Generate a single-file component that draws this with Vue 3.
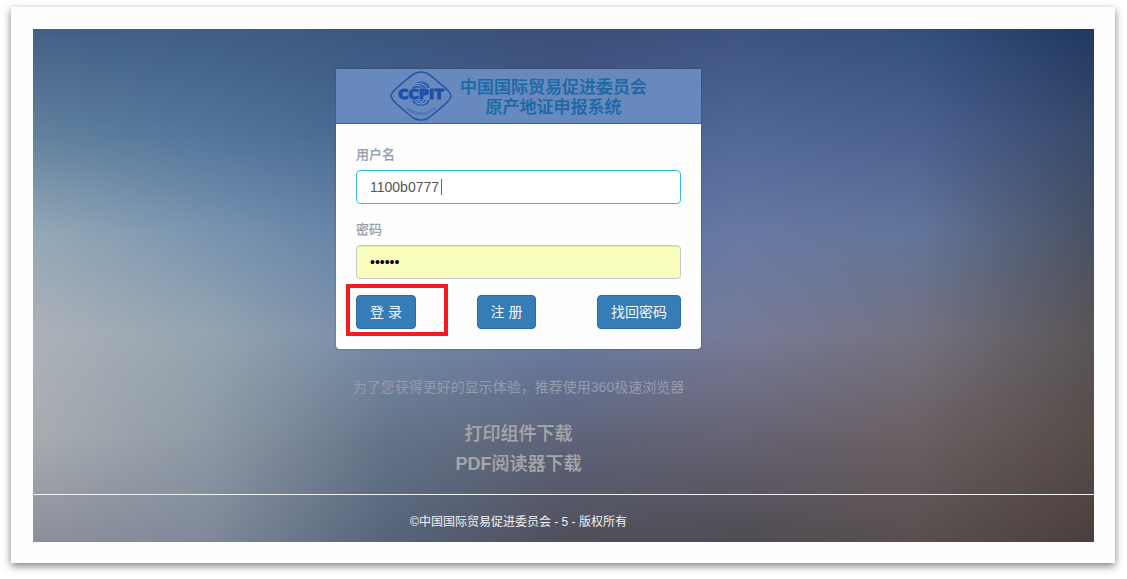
<script setup>
import { ref } from 'vue'

const username = ref('1100b0777')
const password = ref('123456')

// Backdrop colours, left to right, one entry per horizontal band.
const bands = [
  { at: 0, colors: ['#426187', '#3f5e85', '#3a5680', '#3c4f7a', '#3e5380', '#34507e', '#213860'] },
  { at: 20, colors: ['#60809d', '#52759c', '#46678f', '#485b8c', '#506898', '#4b6090', '#384a6b'] },
  { at: 40, colors: ['#95a9b6', '#7a95b0', '#627fa6', '#5b70a3', '#6879a3', '#63769a', '#4a5163'] },
  { at: 60, colors: ['#adb1b9', '#94a5b0', '#768aa8', '#6a7ba3', '#777b98', '#747280', '#595456'] },
  { at: 80, colors: ['#a8acb1', '#8d99a5', '#647388', '#5d6479', '#666273', '#6b5f62', '#564c48'] },
  { at: 100, colors: ['#8c8f9b', '#7e8899', '#56647a', '#504f5b', '#4f4c53', '#584f4f', '#4b3f3d'] },
]

function bandStyle(band, i) {
  const style = { background: `linear-gradient(to right, ${band.colors.join(', ')})` }
  if (i > 0) {
    style.maskImage = `linear-gradient(to bottom, transparent ${bands[i - 1].at}%, #000 ${band.at}%)`
  }
  return style
}
</script>

<template>
  <div class="page">
    <div class="paper">
      <div class="screen">
        <div class="backdrop" aria-hidden="true">
          <div v-for="(band, i) in bands" :key="band.at" class="backdrop__band" :style="bandStyle(band, i)"></div>
        </div>

        <main class="content">
          <form class="card" @submit.prevent>
            <header class="card__header">
              <svg class="logo" width="62" height="50" viewBox="0 0 62 50" aria-hidden="true">
                <path
                  d="M31 1 C37 1 40 4 46 9 C51 14 61 20 61 25 C61 30 51 36 46 41 C40 46 37 49 31 49 C25 49 22 46 16 41 C11 36 1 30 1 25 C1 20 11 14 16 9 C22 4 25 1 31 1 Z"
                  fill="none" stroke="#2456ab" stroke-width="1.6"
                />
                <path d="M22 17 Q23 11 31 10.500 Q39 11 40 17 Z" fill="#3163b0" />
                <path d="M20 16 Q29 12 32 17 M23 13 Q34 11 37 17" fill="none" stroke="#7292c5" stroke-width="1" />
                <path d="M22 29 Q24 35 31 35 Q38 35 40 29 Z" fill="#3163b0" />
                <path d="M25 29 Q26 33 31 33 Q36 33 37 29 M28 29 Q29 31 31 31 Q33 31 34 29" fill="none" stroke="#7f9fce" stroke-width="1" />
                <text class="logo__name" x="31" y="28" text-anchor="middle">CCPIT</text>
                <path id="logo-arc" d="M13 35 Q31 53 49 35" fill="none" />
                <text class="logo__ring"><textPath href="#logo-arc" startOffset="50%" text-anchor="middle">中国国际贸易促进委员会</textPath></text>
              </svg>
              <h1 class="card__title">中国国际贸易促进委员会<br />原产地证申报系统</h1>
            </header>

            <div class="card__body">
              <div class="field">
                <label for="username">用户名</label>
                <div class="field__box">
                  <input id="username" v-model="username" class="field__input field__input--active" type="text" />
                  <span class="field__caret"></span>
                </div>
              </div>
              <div class="field">
                <label for="password">密码</label>
                <input id="password" v-model="password" class="field__input field__input--filled" type="password" />
              </div>
              <div class="actions">
                <div class="actions__login">
                  <button type="submit" class="btn">登 录</button>
                  <span class="actions__mark"></span>
                </div>
                <button type="button" class="btn">注 册</button>
                <button type="button" class="btn">找回密码</button>
              </div>
            </div>
          </form>

          <p class="notice">为了您获得更好的显示体验，推荐使用360极速浏览器</p>
          <nav class="downloads">
            <a href="#print">打印组件下载</a>
            <a href="#pdf"><b>PDF</b>阅读器下载</a>
          </nav>
        </main>

        <footer class="footer">©中国国际贸易促进委员会 - 5 - 版权所有</footer>
      </div>
    </div>
  </div>
</template>

<style>
body {
  margin: 0;
  background: #fff;
}
</style>

<style scoped>
.page {
  padding: 7px 12px 16px 11px;
  font-family: "Liberation Sans", "Noto Sans CJK SC", sans-serif;
  font-size: 14px;
  line-height: 20px;
}
.paper {
  padding: 22px 21px 21px 22px;
  background: #fefefe;
  box-shadow: 0 3px 8px rgba(0, 0, 0, 0.5);
}
.screen {
  position: relative;
  background: #50607c;
}
.backdrop,
.backdrop__band {
  position: absolute;
  inset: 0;
}
.content {
  position: relative;
  display: flex;
  flex-direction: column;
  align-items: center;
  padding: 40px 90px 15px 0;
}
.card {
  width: 100%;
  max-width: 365px;
  border-radius: 1px 1px 4px 4px;
  overflow: hidden;
  background: #fefefe;
  box-shadow: 0 0 2px rgba(30, 40, 70, 0.5);
}
.card__header {
  display: flex;
  align-items: center;
  justify-content: center;
  gap: 8px;
  height: 54px;
  background: #6889bd;
  border-bottom: 1px solid #3f6192;
}
.card__title {
  margin: 0;
  padding-top: 3px;
  color: #1b68a6;
  font-size: 17px;
  font-weight: 500;
  line-height: 20px;
  text-align: center;
  -webkit-text-stroke: 0.2px;
}
.logo__name {
  fill: #1c4fa6;
  stroke: #1c4fa6;
  stroke-width: 1;
  font-family: "DejaVu Sans", sans-serif;
  font-size: 14px;
  font-weight: bold;
}
.logo__ring {
  fill: #2f60ae;
  font-size: 3px;
}
.card__body {
  padding: 21px 20px 20px;
}
.field {
  display: flex;
  flex-direction: column;
  gap: 5px;
  margin-bottom: 16px;
}
.field label {
  color: #979fb0;
  font-size: 13px;
  font-weight: 500;
  -webkit-text-stroke: 0.1px;
}
.field__box {
  position: relative;
}
.field__input {
  display: block;
  box-sizing: border-box;
  width: 100%;
  height: 34px;
  padding: 6px 13px;
  border: 1px solid #c4c8cc;
  border-radius: 4px;
  outline: none;
  background: #fff;
  color: #555;
  font: inherit;
}
.field__input--active {
  border-color: #35bcdc;
}
.field__input--filled {
  background: #f9fdbd;
  color: #000;
  box-shadow: inset 0 1px 1px rgba(0, 0, 0, 0.08);
}
.field__caret {
  position: absolute;
  top: 9px;
  left: 85px;
  width: 1px;
  height: 16px;
  background: #666;
}
.actions {
  display: flex;
  justify-content: space-between;
}
.actions__login {
  position: relative;
}
.actions__mark {
  position: absolute;
  inset: -11px -32px -7px -10px;
  border: 4px solid #f01c20;
  pointer-events: none;
}
.btn {
  display: block;
  height: 34px;
  padding: 0 13px;
  border: 1px solid #2f6da5;
  border-radius: 4px;
  background: #367cb7;
  color: #f4f8fb;
  font: inherit;
  cursor: pointer;
}
.notice {
  margin: 28px 0 22px;
  color: #949cac;
  text-align: center;
}
.downloads {
  display: flex;
  flex-direction: column;
  align-items: center;
  font-size: 18px;
  font-weight: 500;
  line-height: 30px;
}
.downloads a {
  color: #a6a6a8;
  text-decoration: none;
  -webkit-text-stroke: 0.2px;
}
.downloads b {
  -webkit-text-stroke: 0;
}
.footer {
  position: relative;
  padding: 17px 90px 10px 0;
  border-top: 1px solid #eef0f2;
  color: #f0f0f2;
  font-size: 12px;
  text-align: center;
}
</style>
